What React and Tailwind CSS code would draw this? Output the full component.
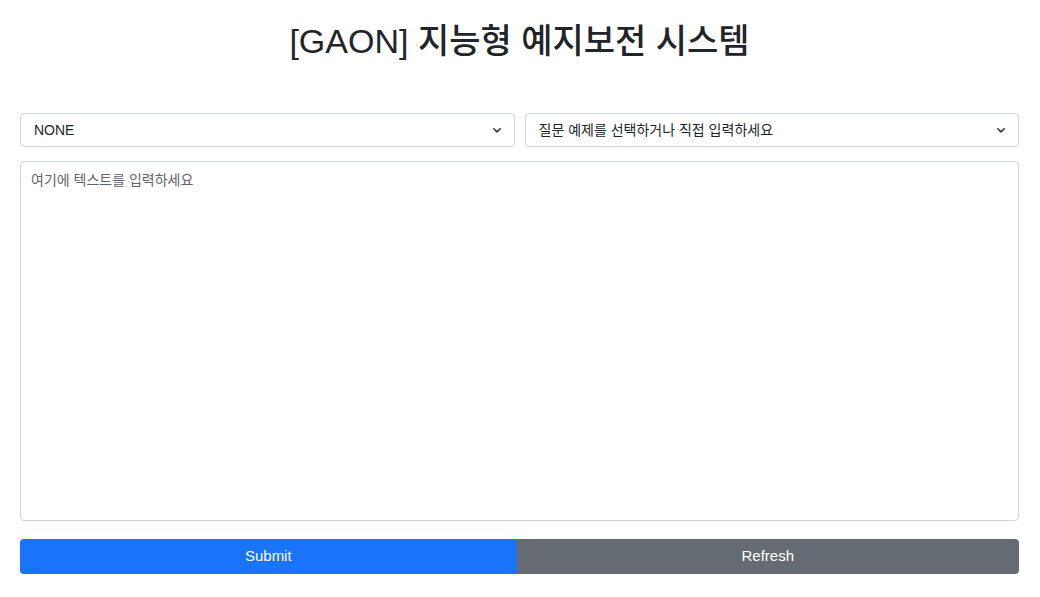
import React, { useState } from 'react';

const KR = { fontFamily: '"Liberation Sans", "Noto Sans CJK KR", sans-serif' };

const Chevron = () => (
  <svg className="pointer-events-none absolute right-[13px] top-1/2 -translate-y-1/2" width="10" height="10" viewBox="0 0 16 16">
    <path d="M3 6l5 5 5-5" fill="none" stroke="#343a40" strokeWidth="2.6" strokeLinecap="round" strokeLinejoin="round" />
  </svg>
);

const Select = ({ value, options, onChange }) => (
  <div className="relative flex-1">
    <select
      value={value}
      onChange={(e) => onChange(e.target.value)}
      className="w-full h-[34px] appearance-none rounded-[4px] border border-[#ced4da] bg-white pl-[13px] pr-8 text-[14px] text-[#212529] outline-none"
      style={KR}
    >
      {options.map((o) => (
        <option key={o} value={o}>{o}</option>
      ))}
    </select>
    <Chevron />
  </div>
);

export default function App() {
  const [mode, setMode] = useState('NONE');
  const [question, setQuestion] = useState('질문 예제를 선택하거나 직접 입력하세요');
  const [text, setText] = useState('');

  return (
    <div className="min-h-screen bg-white pl-5 pr-[21px]" style={KR}>
      <h1 className="pt-[19px] text-center text-[34px] font-medium leading-[44px] text-[#212529]">
        [GAON] 지능형 예지보전 시스템
      </h1>

      <div className="mt-[50px] flex gap-[10px]">
        <Select value={mode} options={['NONE']} onChange={setMode} />
        <Select
          value={question}
          options={['질문 예제를 선택하거나 직접 입력하세요']}
          onChange={setQuestion}
        />
      </div>

      <textarea
        value={text}
        onChange={(e) => setText(e.target.value)}
        placeholder="여기에 텍스트를 입력하세요"
        className="mt-[14px] block h-[360px] w-full resize-none rounded-[4px] border border-[#ced4da] px-[10px] py-[8px] text-[14px] text-[#212529] outline-none placeholder:text-[#5f646a]"
        style={KR}
      />

      <div className="mt-[18px] flex h-[35px] overflow-hidden rounded-[4px]">
        <button className="flex-auto bg-[#1a73fb] px-3 text-[15px] font-medium text-white">Submit</button>
        <button className="flex-auto bg-[#646b72] px-3 text-[15px] font-medium text-white">Refresh</button>
      </div>
    </div>
  );
}
